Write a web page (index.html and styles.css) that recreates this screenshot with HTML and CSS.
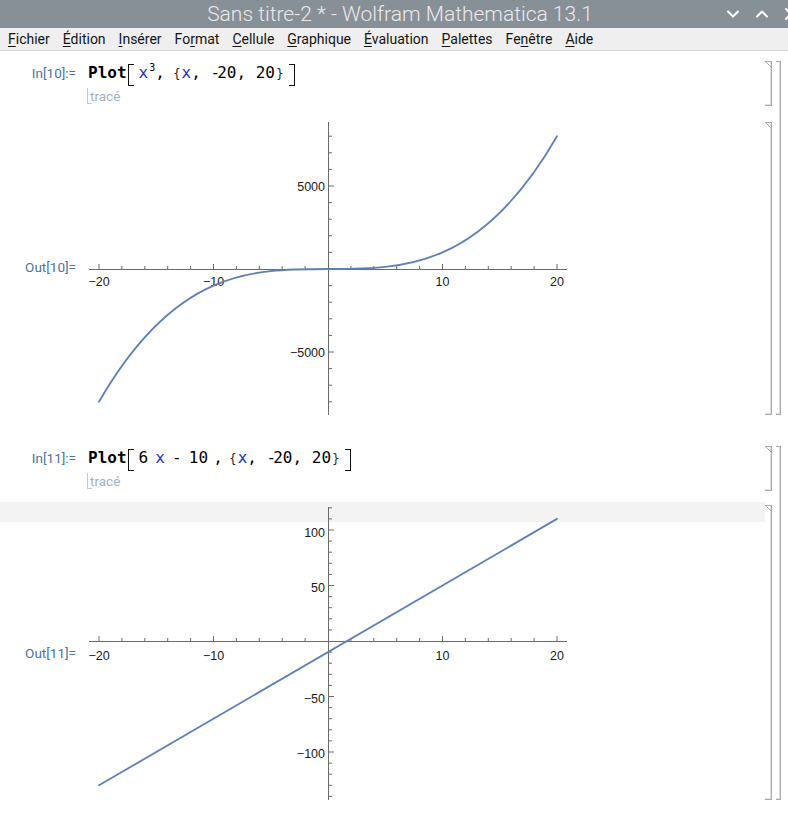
FILE: index.html
```html
<!DOCTYPE html>
<html lang="fr">
<head>
<meta charset="utf-8">
<title>Sans titre-2 * - Wolfram Mathematica 13.1</title>
<link rel="stylesheet" href="styles.css">
</head>
<body>
<div class="titlebar">
  <div></div>
  <div class="title">Sans titre-2 * - Wolfram Mathematica 13.1</div>
  <div class="winctl">
    <svg class="wc" width="12" height="8" viewBox="0 0 12 8"><polyline points="1,1.5 6,6.5 11,1.5"/></svg>
    <svg class="wc" width="12" height="8" viewBox="0 0 12 8"><polyline points="1,6.5 6,1.5 11,6.5"/></svg>
    <svg class="wc" width="12" height="12" viewBox="0 0 12 12"><path d="M1 1L11 11M11 1L1 11"/></svg>
  </div>
</div>
<div class="menubar">
  <span class="mi"><u>F</u>ichier</span>
  <span class="mi"><u>É</u>dition</span>
  <span class="mi"><u>I</u>nsérer</span>
  <span class="mi">Fo<u>r</u>mat</span>
  <span class="mi"><u>C</u>ellule</span>
  <span class="mi"><u>G</u>raphique</span>
  <span class="mi"><u>É</u>valuation</span>
  <span class="mi"><u>P</u>alettes</span>
  <span class="mi">Fe<u>n</u>être</span>
  <span class="mi"><u>A</u>ide</span>
</div>
<div class="notebook">
  <div class="group g1">
    <div class="cells">
      <div class="cell in">
        <div class="main">
          <div class="label">In[10]:=</div>
          <div class="content">
            <div class="code"><span class="kw">Plot</span><span class="br bl"></span><span class="v">x</span><sup class="sup">3</sup>, <span class="brace">{</span><span class="v">x</span>,<span class="wide"> </span><span class="neg">-</span>20,<span class="wide"> </span>20<span class="brace">}</span><span class="br brr"></span></div>
            <div class="hint">tracé</div>
          </div>
        </div>
        <div class="cbr"></div>
      </div>
      <div class="cell out">
        <div class="main">
          <div class="label lo1">Out[10]=</div>
          <div class="content">
            <svg class="plot" width="490" height="293" viewBox="88 122 490 293">
              <path class="axis" d="M89 269.5H567M328.5 122V415"/>
              <path class="axis" d="M99 264V269M213.5 264V269M442.5 264V269M557 264V269M121.9 266V269M144.8 266V269M167.7 266V269M190.6 266V269M236.4 266V269M259.3 266V269M282.2 266V269M305.1 266V269M350.9 266V269M373.8 266V269M396.7 266V269M419.6 266V269M465.4 266V269M488.3 266V269M511.2 266V269M534.1 266V269"/>
              <path class="axis" d="M329 186H334M329 352H334M329 136.2H332M329 152.8H332M329 169.4H332M329 202.6H332M329 219.2H332M329 235.8H332M329 252.4H332M329 285.6H332M329 302.2H332M329 318.8H332M329 335.4H332M329 368.6H332M329 385.2H332M329 401.8H332"/>
              <g class="tl">
                <text x="99" y="285.5" text-anchor="middle">−20</text>
                <text x="213.5" y="285.5" text-anchor="middle">−10</text>
                <text x="442.5" y="285.5" text-anchor="middle">10</text>
                <text x="557" y="285.5" text-anchor="middle">20</text>
                <text x="325" y="190.5" text-anchor="end">5000</text>
                <text x="325" y="356.5" text-anchor="end">−5000</text>
              </g>
              <path class="curve" d="M99 401.8C251.67 136.2 404.33 401.8 557 136.2"/>
            </svg>
          </div>
        </div>
        <div class="cbr"></div>
      </div>
    </div>
    <div class="gbr"></div>
  </div>
  <div class="group g2">
    <div class="cells">
      <div class="cell in">
        <div class="main">
          <div class="label">In[11]:=</div>
          <div class="content">
            <div class="code"><span class="kw">Plot</span><span class="br bl"></span>6 <span class="v">x</span> - 10<span class="tight"> , </span><span class="brace">{</span><span class="v">x</span>,<span class="wide"> </span><span class="neg">-</span>20,<span class="wide"> </span>20<span class="brace">}</span><span class="br brr"></span></div>
            <div class="hint">tracé</div>
          </div>
        </div>
        <div class="cbr"></div>
      </div>
      <div class="cell out">
        <div class="main band">
          <div class="label lo2">Out[11]=</div>
          <div class="content">
            <svg class="plot p2" width="490" height="295" viewBox="88 505 490 295">
              <path class="axis" d="M89 641.5H567M328.5 507V800"/>
              <path class="axis" d="M99 636V641M213.5 636V641M442.5 636V641M557 636V641M121.9 638V641M144.8 638V641M167.7 638V641M190.6 638V641M236.4 638V641M259.3 638V641M282.2 638V641M305.1 638V641M350.9 638V641M373.8 638V641M396.7 638V641M419.6 638V641M465.4 638V641M488.3 638V641M511.2 638V641M534.1 638V641"/>
              <path class="axis" d="M329 530H334M329 585.5H334M329 696.5H334M329 752H334M329 507.8H332M329 518.9H332M329 541.1H332M329 552.2H332M329 563.3H332M329 574.4H332M329 596.6H332M329 607.7H332M329 618.8H332M329 629.9H332M329 652.1H332M329 663.2H332M329 674.3H332M329 685.4H332M329 707.6H332M329 718.7H332M329 729.8H332M329 740.9H332M329 763.1H332M329 774.2H332M329 785.3H332M329 796.4H332"/>
              <g class="tl">
                <text x="99" y="659.5" text-anchor="middle">−20</text>
                <text x="213.5" y="659.5" text-anchor="middle">−10</text>
                <text x="442.5" y="659.5" text-anchor="middle">10</text>
                <text x="557" y="659.5" text-anchor="middle">20</text>
                <text x="325" y="536.5" text-anchor="end">100</text>
                <text x="325" y="591.5" text-anchor="end">50</text>
                <text x="325" y="702.5" text-anchor="end">−50</text>
                <text x="325" y="757.5" text-anchor="end">−100</text>
              </g>
              <path class="curve" d="M99 785.3L557 518.9"/>
            </svg>
          </div>
        </div>
        <div class="cbr"></div>
      </div>
    </div>
    <div class="gbr"></div>
  </div>
</div>
</body>
</html>
```

FILE: styles.css
```css
* { box-sizing: border-box; }

html, body {
  margin: 0;
  padding: 0;
}

body {
  width: 788px;
  height: 813px;
  overflow: hidden;
  background: #ffffff;
  font-family: Roboto, "Liberation Sans", sans-serif;
  color: #111;
}

/* ---------- title bar ---------- */
.titlebar {
  height: 28px;
  background: #878f97;
  display: grid;
  grid-template-columns: 1fr auto 1fr;
  align-items: center;
  overflow: hidden;
}

.title {
  font-family: Roboto, sans-serif;
  font-weight: 300;
  font-size: 21px;
  color: #eaeaea;
  padding-left: 12px;
  white-space: nowrap;
}

.winctl {
  justify-self: end;
  display: flex;
  align-items: center;
  gap: 17px;
  margin-right: -9px;
}

.wc {
  fill: none;
  stroke: #ffffff;
  stroke-width: 2;
  stroke-linecap: round;
  stroke-linejoin: round;
}

/* ---------- menu bar ---------- */
.menubar {
  height: 23px;
  background: #efefef;
  border-bottom: 1px solid #d6d6d6;
  display: flex;
  gap: 13px;
  padding-left: 8px;
  font-size: 14px;
  line-height: 22px;
  color: #141414;
}

.mi u {
  text-decoration-thickness: 1px;
  text-underline-offset: 2px;
}

/* ---------- notebook ---------- */
.notebook {
  padding-top: 10px;
}

.group {
  display: flex;
}

.group + .group {
  margin-top: 31px;
}

.cells {
  flex: 1;
  display: flex;
  flex-direction: column;
}

.g1 .cells { gap: 16px; }
.g2 .cells { gap: 11px; }

.cell {
  display: flex;
}

.main {
  flex: 1;
  display: flex;
}

.in .main {
  align-items: baseline;
  height: 45px;
}

.label {
  width: 76px;
  flex: none;
  text-align: right;
  font-family: Roboto, sans-serif;
  font-size: 13.5px;
  line-height: 16px;
  color: #4a74a0;
  white-space: nowrap;
}

.lo1 { padding-top: 137px; }
.lo2 { padding-top: 143px; }

.content {
  margin-left: 12px;
  flex: 1;
  min-width: 0;
}

/* input code */
.code {
  font-family: "DejaVu Sans Mono", "Liberation Mono", monospace;
  font-size: 16px;
  line-height: 24px;
  height: 24px;
  color: #000;
  white-space: pre;
  word-spacing: -2.5px;
}

.wide { word-spacing: 0; }
.tight { word-spacing: -4.5px; }
.neg { letter-spacing: -3px; }

.kw { font-weight: bold; }

.v { color: #1c35c4; }

.sup {
  font-size: 10px;
  vertical-align: 7px;
  line-height: 0;
  margin-left: 1px;
}

.brace {
  display: inline-block;
  width: 9.63px;
  text-align: center;
  font-size: 12px;
  color: #222;
}

.br {
  display: inline-block;
  width: 6px;
  height: 22px;
  vertical-align: -8px;
  border: 1.5px solid #111;
}

.bl {
  border-right: 0;
  margin: 0 5px 0 1px;
}

.brr {
  border-left: 0;
  margin-left: 4px;
}

.hint {
  display: inline-block;
  margin-top: 3px;
  margin-left: -1px;
  padding-left: 2px;
  font-family: Roboto, sans-serif;
  font-size: 13.5px;
  line-height: 16px;
  color: #9db2c6;
  border-left: 1px solid #c9c9c9;
  background: linear-gradient(#c9c9c9, #c9c9c9) no-repeat left bottom / 4px 1px;
}

/* plots */
.plot {
  display: block;
  overflow: visible;
}

.p2 { margin-top: 3px; }

.band {
  background: linear-gradient(#f3f3f3 0, #f3f3f3 20px, transparent 20px) no-repeat;
}

.axis {
  fill: none;
  stroke: #6a6a6a;
  stroke-width: 1;
}

.curve {
  fill: none;
  stroke: #5e81b5;
  stroke-width: 1.8;
  stroke-linecap: round;
}

.tl {
  font-family: "Liberation Sans", Arial, sans-serif;
  font-size: 12.5px;
  fill: #1a1a1a;
}

/* cell brackets */
.cbr {
  width: 7px;
  flex: none;
  border: 1px solid #ababab;
  border-left: 0;
  position: relative;
  box-shadow: inset -1px 0 0 #dedede, inset 0 -1px 0 #dedede;
}

.cbr::before {
  content: "";
  position: absolute;
  top: -1px;
  left: 0;
  width: 7px;
  height: 7px;
  background: linear-gradient(to top right, transparent calc(50% - 0.7px), #ababab calc(50% - 0.7px), #ababab calc(50% + 0.7px), transparent calc(50% + 0.7px));
}

.g2 .out .cbr { margin-top: 3px; }

.gbr {
  width: 5px;
  flex: none;
  margin: 0 7px 0 4px;
  border: 1px solid #ababab;
  border-left: 0;
  box-shadow: inset -1px 0 0 #dedede, inset 0 -1px 0 #dedede;
}
```
